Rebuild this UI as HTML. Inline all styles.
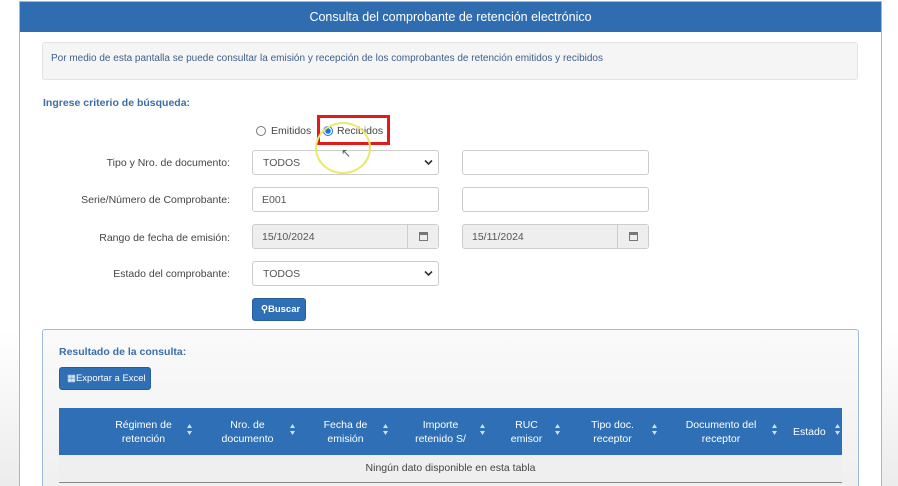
<!DOCTYPE html>
<html><head><meta charset="utf-8"><style>
*{box-sizing:border-box;margin:0;padding:0}
html,body{width:898px;height:486px;overflow:hidden}
body{background:linear-gradient(#fff 0,#fff 330px,#ececec 486px);font-family:"Liberation Sans",sans-serif;position:relative;color:#555}
.a{position:absolute}
.panel{left:19px;top:1px;width:863px;height:485px;border:1px solid #9fbad6;border-bottom:none;background:#fff}
.hdr{left:20px;top:2px;width:861px;height:30px;background:#2f6db0;color:#fff;font-size:12.5px;text-align:center;line-height:30px}
.info{left:42px;top:42px;width:816px;height:38px;background:#f5f5f5;border:1px solid #e3e3e3;border-radius:3px;font-size:10px;color:#3f5f8a;padding:10px 8px}
.lbl{font-size:10.5px;color:#444;text-align:right;width:200px;left:30px}
.inp{border:1px solid #ccc;border-radius:3px;background:#fff;height:25px;font-size:10.5px;color:#555;padding:6px 10px}
.dis{background:#eee}
.add{position:absolute;right:0;top:0;width:31px;height:23px;border-left:1px solid #ccc;background:#eee}
.btn{background:#2f6fb5;border:1px solid #275d99;border-radius:3px;color:#fff;font-size:9.5px}
th{color:#fff;font-weight:normal;font-size:10.5px;line-height:14px;text-align:center;position:relative}
.s{position:absolute;right:4px;top:16px;width:5px;height:11px}
.chev{position:absolute;right:5px;top:8px}
</style></head><body>
<div class="a panel"></div>
<div class="a hdr">Consulta del comprobante de retención electrónico</div>
<div class="a info">Por medio de esta pantalla se puede consultar la emisión y recepción de los comprobantes de retención emitidos y recibidos</div>
<div class="a" style="left:43px;top:97px;font-size:10.5px;font-weight:bold;color:#3a6ea8">Ingrese criterio de búsqueda:</div>
<div class="a" style="left:256px;top:126px;width:10px;height:10px;border:1px solid #777;border-radius:50%"></div>
<div class="a" style="left:271px;top:125px;font-size:10.5px;color:#444">Emitidos</div>
<div class="a" style="left:323px;top:126px;width:10px;height:10px;border:1px solid #1a73e8;border-radius:50%;background:radial-gradient(#1a73e8 0 2.5px,#fff 3px)"></div>
<div class="a" style="left:337px;top:125px;font-size:10.5px;color:#444">Recibidos</div>
<div class="a" style="left:317px;top:115px;width:73px;height:30px;border:3px solid #e01b1b"></div>
<div class="a lbl" style="top:157px">Tipo y Nro. de documento:</div>
<div class="a lbl" style="top:194px">Serie/Número de Comprobante:</div>
<div class="a lbl" style="top:232px">Rango de fecha de emisión:</div>
<div class="a lbl" style="top:268px">Estado del comprobante:</div>
<div class="a inp" style="left:252px;top:150px;width:187px">TODOS<svg class="chev" width="9" height="7" viewBox="0 0 9 7"><path d="M1 1.5L4.5 5 8 1.5" stroke="#333" stroke-width="1.6" fill="none"/></svg></div>
<div class="a inp" style="left:462px;top:150px;width:187px"></div>
<div class="a inp" style="left:252px;top:187px;width:187px;padding-left:9px">E001</div>
<div class="a inp" style="left:462px;top:187px;width:187px"></div>
<div class="a inp dis" style="left:252px;top:224px;width:187px;padding-left:9px">15/10/2024<span class="add"><span style="position:absolute;left:11px;top:7px;width:9px;height:9px;border:1px solid #777;border-top-width:3px"></span></span></div>
<div class="a inp dis" style="left:462px;top:224px;width:187px;padding-left:9px">15/11/2024<span class="add"><span style="position:absolute;left:11px;top:7px;width:9px;height:9px;border:1px solid #777;border-top-width:3px"></span></span></div>
<div class="a inp" style="left:252px;top:261px;width:187px">TODOS<svg class="chev" width="9" height="7" viewBox="0 0 9 7"><path d="M1 1.5L4.5 5 8 1.5" stroke="#333" stroke-width="1.6" fill="none"/></svg></div>
<div class="a" style="left:315px;top:122px;width:56px;height:52px;border:2px solid #eee86a;border-radius:50%;z-index:5"></div>
<div class="a" style="left:341px;top:146px;font-size:12px;color:#555;z-index:6">&#8598;</div>
<div class="a btn" style="left:252px;top:298px;width:54px;height:23px;line-height:21px;padding-left:8px;font-weight:bold">&#9906;Buscar</div>
<div class="a" style="left:42px;top:329px;width:817px;height:170px;border:1px solid #9fbad6;border-radius:3px;background:linear-gradient(#fafafa,#efefef)"></div>
<div class="a" style="left:59px;top:346px;font-size:10.5px;font-weight:bold;color:#3a6ea8">Resultado de la consulta:</div>
<div class="a btn" style="left:59px;top:367px;width:92px;height:23px;line-height:22px;padding-left:7px">&#9638;Exportar a Excel</div>
<table class="a" style="left:59px;top:408px;width:783px;border-collapse:collapse">
<tr style="background:#2f6fb5;height:47px">
<th style="width:32px"></th><th style="width:105px">Régimen de<br>retención<svg class="s" viewBox="0 0 5 11"><path d="M2.5 0L5 4H0zM2.5 11L5 7H0z" fill="#cfe0f2"/></svg></th><th style="width:103px">Nro. de<br>documento<svg class="s" viewBox="0 0 5 11"><path d="M2.5 0L5 4H0zM2.5 11L5 7H0z" fill="#cfe0f2"/></svg></th><th style="width:93px">Fecha de<br>emisión<svg class="s" viewBox="0 0 5 11"><path d="M2.5 0L5 4H0zM2.5 11L5 7H0z" fill="#cfe0f2"/></svg></th><th style="width:97px">Importe<br>retenido S/<svg class="s" viewBox="0 0 5 11"><path d="M2.5 0L5 4H0zM2.5 11L5 7H0z" fill="#cfe0f2"/></svg></th><th style="width:75px">RUC<br>emisor<svg class="s" viewBox="0 0 5 11"><path d="M2.5 0L5 4H0zM2.5 11L5 7H0z" fill="#cfe0f2"/></svg></th><th style="width:97px">Tipo doc.<br>receptor<svg class="s" viewBox="0 0 5 11"><path d="M2.5 0L5 4H0zM2.5 11L5 7H0z" fill="#cfe0f2"/></svg></th><th style="width:120px">Documento del<br>receptor<svg class="s" viewBox="0 0 5 11"><path d="M2.5 0L5 4H0zM2.5 11L5 7H0z" fill="#cfe0f2"/></svg></th><th style="text-align:left;padding-left:12px">Estado<svg class="s" style="right:2px" viewBox="0 0 5 11"><path d="M2.5 0L5 4H0zM2.5 11L5 7H0z" fill="#cfe0f2"/></svg></th></tr>
<tr style="background:#efefef;height:27px;border-bottom:1px solid #888"><td colspan="9" style="text-align:center;font-size:10.5px;color:#444">Ningún dato disponible en esta tabla</td></tr>
</table>
</body></html>
